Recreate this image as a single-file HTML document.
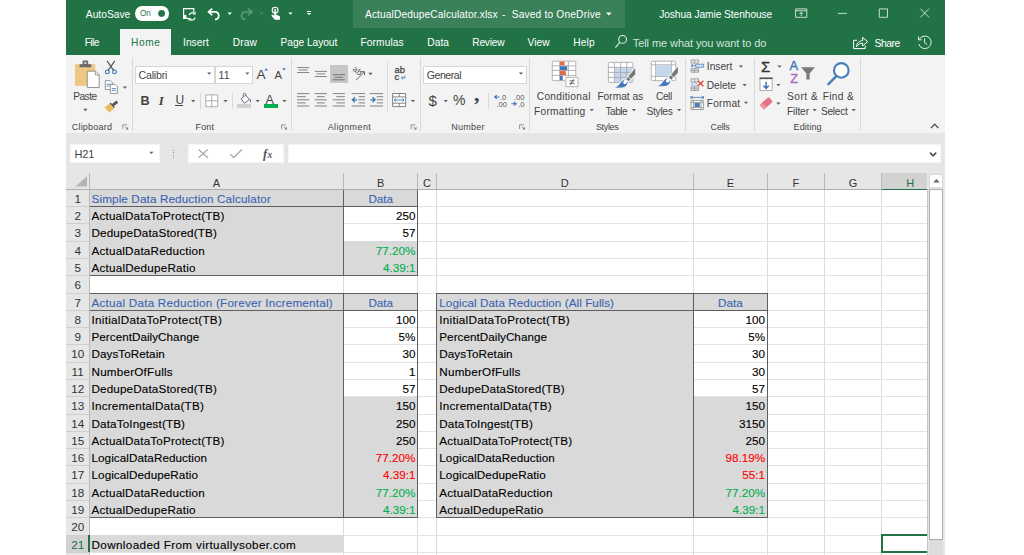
<!DOCTYPE html>
<html lang="en"><head><meta charset="utf-8"><title>ActualDedupeCalculator.xlsx - Excel</title>
<style>
html,body{margin:0;padding:0;background:#fff;}
body{width:1024px;height:555px;position:relative;overflow:hidden;font-family:"Liberation Sans",sans-serif;}
#app div{position:absolute;box-sizing:border-box;}
#app span{position:absolute;white-space:pre;line-height:1;}
#app svg{position:absolute;left:0;top:0;}
</style></head><body><div id="app">
<div style="left:66.40px;top:0.00px;width:878.40px;height:55.40px;background:#217346;"></div>
<div style="left:352.70px;top:0.00px;width:272.50px;height:27.90px;background:#3a8059;"></div>
<div style="left:120.20px;top:28.60px;width:50.80px;height:27.20px;background:#f3f3f3;"></div>
<div style="left:66.40px;top:55.40px;width:878.40px;height:77.80px;background:#f3f3f3;"></div>
<div style="left:66.40px;top:133.20px;width:878.40px;height:421.80px;background:#e6e6e6;"></div>
<div style="left:134.70px;top:6.30px;width:33.90px;height:14.30px;background:#fff;border-radius:7.2px;"></div>
<div style="left:131.90px;top:58.00px;width:1.00px;height:72.80px;background:#d9d9d9;"></div>
<div style="left:291.20px;top:58.00px;width:1.00px;height:72.80px;background:#d9d9d9;"></div>
<div style="left:420.10px;top:58.00px;width:1.00px;height:72.80px;background:#d9d9d9;"></div>
<div style="left:528.90px;top:58.00px;width:1.00px;height:72.80px;background:#d9d9d9;"></div>
<div style="left:685.00px;top:58.00px;width:1.00px;height:72.80px;background:#d9d9d9;"></div>
<div style="left:754.10px;top:58.00px;width:1.00px;height:72.80px;background:#d9d9d9;"></div>
<div style="left:859.50px;top:58.00px;width:1.00px;height:72.80px;background:#d9d9d9;"></div>
<div style="left:387.40px;top:61.40px;width:1.00px;height:50.90px;background:#d9d9d9;"></div>
<div style="left:199.80px;top:92.70px;width:1.00px;height:16.70px;background:#d9d9d9;"></div>
<div style="left:232.00px;top:92.70px;width:1.00px;height:16.70px;background:#d9d9d9;"></div>
<div style="left:488.10px;top:92.70px;width:1.00px;height:16.70px;background:#d9d9d9;"></div>
<div style="left:135.20px;top:65.50px;width:79.70px;height:18.00px;background:#fff;border:1px solid #d6d6d6;"></div>
<div style="left:214.90px;top:65.50px;width:38.30px;height:18.00px;background:#fff;border:1px solid #d6d6d6;"></div>
<div style="left:423.40px;top:65.50px;width:103.40px;height:18.00px;background:#fff;border:1px solid #d6d6d6;"></div>
<div style="left:175.30px;top:105.30px;width:8.20px;height:1.00px;background:#444444;"></div>
<div style="left:263.90px;top:104.20px;width:14.30px;height:3.70px;background:#00b050;"></div>
<div style="left:69.90px;top:143.70px;width:90.20px;height:19.50px;background:#fff;border:1px solid #f4f4f4;"></div>
<div style="left:187.50px;top:143.70px;width:96.80px;height:19.50px;background:#fff;border:1px solid #f4f4f4;"></div>
<div style="left:287.80px;top:143.70px;width:653.00px;height:19.50px;background:#fff;border:1px solid #f4f4f4;"></div>
<div style="left:89.00px;top:189.30px;width:838.30px;height:365.70px;background:#fff;"></div>
<div style="left:881.50px;top:172.80px;width:45.80px;height:16.50px;background:#d2d2d2;"></div>
<div style="left:66.40px;top:535.10px;width:22.60px;height:17.29px;background:#d2d2d2;"></div>
<div style="left:343.40px;top:189.30px;width:1.00px;height:365.70px;background:#dcdcdc;"></div>
<div style="left:417.10px;top:189.30px;width:1.00px;height:365.70px;background:#dcdcdc;"></div>
<div style="left:435.80px;top:189.30px;width:1.00px;height:365.70px;background:#dcdcdc;"></div>
<div style="left:692.90px;top:189.30px;width:1.00px;height:365.70px;background:#dcdcdc;"></div>
<div style="left:766.80px;top:189.30px;width:1.00px;height:365.70px;background:#dcdcdc;"></div>
<div style="left:824.00px;top:189.30px;width:1.00px;height:365.70px;background:#dcdcdc;"></div>
<div style="left:881.00px;top:189.30px;width:1.00px;height:365.70px;background:#dcdcdc;"></div>
<div style="left:89.00px;top:206.09px;width:838.30px;height:1.00px;background:#e2e2e2;"></div>
<div style="left:89.00px;top:223.38px;width:838.30px;height:1.00px;background:#e2e2e2;"></div>
<div style="left:89.00px;top:240.67px;width:838.30px;height:1.00px;background:#e2e2e2;"></div>
<div style="left:89.00px;top:257.96px;width:838.30px;height:1.00px;background:#e2e2e2;"></div>
<div style="left:89.00px;top:275.25px;width:838.30px;height:1.00px;background:#e2e2e2;"></div>
<div style="left:89.00px;top:292.54px;width:838.30px;height:1.00px;background:#e2e2e2;"></div>
<div style="left:89.00px;top:309.83px;width:838.30px;height:1.00px;background:#e2e2e2;"></div>
<div style="left:89.00px;top:327.12px;width:838.30px;height:1.00px;background:#e2e2e2;"></div>
<div style="left:89.00px;top:344.41px;width:838.30px;height:1.00px;background:#e2e2e2;"></div>
<div style="left:89.00px;top:361.70px;width:838.30px;height:1.00px;background:#e2e2e2;"></div>
<div style="left:89.00px;top:378.99px;width:838.30px;height:1.00px;background:#e2e2e2;"></div>
<div style="left:89.00px;top:396.28px;width:838.30px;height:1.00px;background:#e2e2e2;"></div>
<div style="left:89.00px;top:413.57px;width:838.30px;height:1.00px;background:#e2e2e2;"></div>
<div style="left:89.00px;top:430.86px;width:838.30px;height:1.00px;background:#e2e2e2;"></div>
<div style="left:89.00px;top:448.15px;width:838.30px;height:1.00px;background:#e2e2e2;"></div>
<div style="left:89.00px;top:465.44px;width:838.30px;height:1.00px;background:#e2e2e2;"></div>
<div style="left:89.00px;top:482.73px;width:838.30px;height:1.00px;background:#e2e2e2;"></div>
<div style="left:89.00px;top:500.02px;width:838.30px;height:1.00px;background:#e2e2e2;"></div>
<div style="left:89.00px;top:517.31px;width:838.30px;height:1.00px;background:#e2e2e2;"></div>
<div style="left:89.00px;top:534.60px;width:838.30px;height:1.00px;background:#e2e2e2;"></div>
<div style="left:89.00px;top:551.89px;width:838.30px;height:1.00px;background:#e2e2e2;"></div>
<div style="left:89.00px;top:189.30px;width:254.90px;height:86.45px;background:#d9d9d9;"></div>
<div style="left:343.90px;top:189.30px;width:73.70px;height:17.29px;background:#d9d9d9;"></div>
<div style="left:343.90px;top:241.17px;width:73.70px;height:34.58px;background:#d9d9d9;"></div>
<div style="left:89.00px;top:293.04px;width:254.90px;height:224.77px;background:#d9d9d9;"></div>
<div style="left:343.90px;top:293.04px;width:73.70px;height:17.29px;background:#d9d9d9;"></div>
<div style="left:343.90px;top:396.78px;width:73.70px;height:121.03px;background:#d9d9d9;"></div>
<div style="left:436.30px;top:293.04px;width:257.10px;height:224.77px;background:#d9d9d9;"></div>
<div style="left:693.40px;top:293.04px;width:73.90px;height:17.29px;background:#d9d9d9;"></div>
<div style="left:693.40px;top:396.78px;width:73.90px;height:121.03px;background:#d9d9d9;"></div>
<div style="left:89.00px;top:535.10px;width:254.90px;height:17.29px;background:#d9d9d9;"></div>
<div style="left:89.00px;top:206.00px;width:329.00px;height:1.00px;background:#5f5f5f;"></div>
<div style="left:89.00px;top:275.00px;width:329.00px;height:1.00px;background:#5f5f5f;"></div>
<div style="left:343.00px;top:189.00px;width:1.00px;height:87.00px;background:#5f5f5f;"></div>
<div style="left:417.00px;top:189.00px;width:1.00px;height:87.00px;background:#5f5f5f;"></div>
<div style="left:89.00px;top:293.00px;width:329.00px;height:1.00px;background:#5f5f5f;"></div>
<div style="left:89.00px;top:310.00px;width:329.00px;height:1.00px;background:#5f5f5f;"></div>
<div style="left:89.00px;top:517.00px;width:329.00px;height:1.00px;background:#5f5f5f;"></div>
<div style="left:343.00px;top:293.00px;width:1.00px;height:225.00px;background:#5f5f5f;"></div>
<div style="left:417.00px;top:293.00px;width:1.00px;height:225.00px;background:#5f5f5f;"></div>
<div style="left:436.00px;top:293.00px;width:332.00px;height:1.00px;background:#5f5f5f;"></div>
<div style="left:436.00px;top:310.00px;width:332.00px;height:1.00px;background:#5f5f5f;"></div>
<div style="left:436.00px;top:517.00px;width:332.00px;height:1.00px;background:#5f5f5f;"></div>
<div style="left:436.00px;top:293.00px;width:1.00px;height:225.00px;background:#5f5f5f;"></div>
<div style="left:693.00px;top:293.00px;width:1.00px;height:225.00px;background:#5f5f5f;"></div>
<div style="left:767.00px;top:293.00px;width:1.00px;height:225.00px;background:#5f5f5f;"></div>
<div style="left:88.50px;top:173.00px;width:1.00px;height:16.30px;background:#b9b9b9;"></div>
<div style="left:343.40px;top:173.00px;width:1.00px;height:16.30px;background:#b9b9b9;"></div>
<div style="left:417.10px;top:173.00px;width:1.00px;height:16.30px;background:#b9b9b9;"></div>
<div style="left:435.80px;top:173.00px;width:1.00px;height:16.30px;background:#b9b9b9;"></div>
<div style="left:692.90px;top:173.00px;width:1.00px;height:16.30px;background:#b9b9b9;"></div>
<div style="left:766.80px;top:173.00px;width:1.00px;height:16.30px;background:#b9b9b9;"></div>
<div style="left:824.00px;top:173.00px;width:1.00px;height:16.30px;background:#b9b9b9;"></div>
<div style="left:881.00px;top:173.00px;width:1.00px;height:16.30px;background:#b9b9b9;"></div>
<div style="left:66.40px;top:188.80px;width:860.90px;height:1.00px;background:#adadad;"></div>
<div style="left:88.50px;top:189.30px;width:1.00px;height:365.70px;background:#b9b9b9;"></div>
<div style="left:66.40px;top:206.09px;width:22.60px;height:1.00px;background:#cfcfcf;"></div>
<div style="left:66.40px;top:223.38px;width:22.60px;height:1.00px;background:#cfcfcf;"></div>
<div style="left:66.40px;top:240.67px;width:22.60px;height:1.00px;background:#cfcfcf;"></div>
<div style="left:66.40px;top:257.96px;width:22.60px;height:1.00px;background:#cfcfcf;"></div>
<div style="left:66.40px;top:275.25px;width:22.60px;height:1.00px;background:#cfcfcf;"></div>
<div style="left:66.40px;top:292.54px;width:22.60px;height:1.00px;background:#cfcfcf;"></div>
<div style="left:66.40px;top:309.83px;width:22.60px;height:1.00px;background:#cfcfcf;"></div>
<div style="left:66.40px;top:327.12px;width:22.60px;height:1.00px;background:#cfcfcf;"></div>
<div style="left:66.40px;top:344.41px;width:22.60px;height:1.00px;background:#cfcfcf;"></div>
<div style="left:66.40px;top:361.70px;width:22.60px;height:1.00px;background:#cfcfcf;"></div>
<div style="left:66.40px;top:378.99px;width:22.60px;height:1.00px;background:#cfcfcf;"></div>
<div style="left:66.40px;top:396.28px;width:22.60px;height:1.00px;background:#cfcfcf;"></div>
<div style="left:66.40px;top:413.57px;width:22.60px;height:1.00px;background:#cfcfcf;"></div>
<div style="left:66.40px;top:430.86px;width:22.60px;height:1.00px;background:#cfcfcf;"></div>
<div style="left:66.40px;top:448.15px;width:22.60px;height:1.00px;background:#cfcfcf;"></div>
<div style="left:66.40px;top:465.44px;width:22.60px;height:1.00px;background:#cfcfcf;"></div>
<div style="left:66.40px;top:482.73px;width:22.60px;height:1.00px;background:#cfcfcf;"></div>
<div style="left:66.40px;top:500.02px;width:22.60px;height:1.00px;background:#cfcfcf;"></div>
<div style="left:66.40px;top:517.31px;width:22.60px;height:1.00px;background:#cfcfcf;"></div>
<div style="left:66.40px;top:534.60px;width:22.60px;height:1.00px;background:#cfcfcf;"></div>
<div style="left:66.40px;top:551.89px;width:22.60px;height:1.00px;background:#cfcfcf;"></div>
<div style="left:881.50px;top:188.50px;width:45.80px;height:1.60px;background:#217346;"></div>
<div style="left:88.00px;top:535.10px;width:1.60px;height:17.29px;background:#217346;"></div>
<div style="left:880.60px;top:534.10px;width:60.00px;height:19.29px;background:transparent;border:2px solid #217346;"></div>
<div style="left:927.30px;top:172.50px;width:17.50px;height:382.50px;background:#e6e6e6;"></div>
<div style="left:926.80px;top:189.30px;width:1.00px;height:365.70px;background:#c4c4c4;"></div>
<div style="left:929.40px;top:173.70px;width:14.00px;height:14.20px;background:#fff;border:1px solid #dadada;"></div>
<div style="left:929.40px;top:189.20px;width:14.00px;height:351.20px;background:#fff;border:1px solid #ababab;"></div>
<div style="left:929.40px;top:540.40px;width:14.00px;height:14.60px;background:#dcdcdc;"></div>
<div style="left:306.80px;top:11.00px;width:4.40px;height:0.90px;background:#fff;"></div>
<div style="left:237.30px;top:104.40px;width:14.00px;height:3.20px;background:#d0d0d0;"></div>
<div style="left:330.20px;top:65.10px;width:17.70px;height:18.10px;background:#c6c6c6;"></div>
<div style="left:172.50px;top:149.60px;width:1.10px;height:1.10px;background:#8f8f8f;"></div>
<div style="left:172.50px;top:152.20px;width:1.10px;height:1.10px;background:#8f8f8f;"></div>
<div style="left:172.50px;top:154.80px;width:1.10px;height:1.10px;background:#8f8f8f;"></div>
<div style="left:172.50px;top:157.40px;width:1.10px;height:1.10px;background:#8f8f8f;"></div>
<svg width="1024" height="555" viewBox="0 0 1024 555">
<circle cx="161.6" cy="13.4" r="3.4" fill="#217346"/>
<g fill="none" stroke="#fff" stroke-width="1.2"><path d="M189 18.3H183.6V8.7H193.8V12.4"/><path d="M189.2 15.2a3 3 0 0 1 5.4 -1.2M195 17.6a3 3 0 0 1 -5.4 1.2"/></g>
<path d="M183 14.9h3.4v3.9H183z" fill="#fff"/>
<path d="M195.6 11.6v3h-3zM188.6 21.2v-3h3z" fill="#fff"/>
<path d="M212.3 8.6L208.4 11.9L212.3 15.2M208.6 11.9H216a4 4 0 0 1 0.6 7.4h-1.6" fill="none" stroke="#fff" stroke-width="1.7" stroke-linejoin="round"/>
<path d="M227.50 12.50h4.40l-2.20 2.40z" fill="#fff"/>
<path d="M248.1 8.6L252 11.9L248.1 15.2M251.8 11.9H244.4a4 4 0 0 0 -0.6 7.4h1.6" fill="none" stroke="#5f9c7b" stroke-width="1.5" stroke-linejoin="round"/>
<path d="M259.60 12.50h4.00l-2.00 2.00z" fill="#4f8f6d"/>
<circle cx="275.1" cy="10.2" r="2.9" fill="none" stroke="#fff" stroke-width="1.1"/>
<path d="M274.3 9.6a0.8 0.8 0 0 1 1.6 0V14.6L279.9 16.2V19.7H274.8L271.2 15.6L272.6 14.6L274.3 15.8z" fill="#fff"/>
<path d="M288.20 12.40h4.40l-2.20 2.40z" fill="#fff"/>
<path d="M306.80 12.90h4.40l-2.20 2.20z" fill="#fff"/>
<path d="M606.00 12.55h5.60l-2.80 2.90z" fill="#fff"/>
<g fill="none" stroke="#e6f0ea" stroke-width="1.1"><circle cx="622.6" cy="39.4" r="3.9"/><path d="M619.8 42.3L615.4 47.6"/></g>
<g fill="none" stroke="#dbe9e1" stroke-width="0.9"><path d="M795.6 8.9H806.8V17.3H795.6zM795.6 10.8H806.8M801.2 16V12.3M799.4 14L801.2 12.2L803 14"/><path d="M837.9 13.4H846.8"/><path d="M879.3 8.9H887.5V17.3H879.3z"/><path d="M920.4 8.7L929 17.4M929 8.7L920.4 17.4"/></g>
<g fill="none" stroke="#fff" stroke-width="1"><path d="M857 40.300H853.600V48.600H865.200V45.800"/><path d="M856.400 47.000C856.600 42.800 859.400 40.800 862.600 40.600V37.400L867.700 41.700L862.600 46.000V43.200C859.800 43.200 857.800 44.300 856.400 47.000z"/></g>
<g fill="none" stroke="#e6f0ea" stroke-width="1"><path d="M919.4 39.2A6.3 6.3 0 1 1 918.8 44"/><path d="M918.5 36.6V39.8H921.7"/><path d="M924.6 38.4V42.6L927.2 44.6"/></g>
<path d="M207.10 72.45h4.20l-2.10 2.30z" fill="#5e5e5e"/>
<path d="M245.20 72.45h4.20l-2.10 2.30z" fill="#5e5e5e"/>
<path d="M518.90 72.45h4.20l-2.10 2.30z" fill="#5e5e5e"/>
<path d="M83.30 108.85h4.20l-2.10 2.30z" fill="#5e5e5e"/>
<path d="M122.80 86.55h4.20l-2.10 2.30z" fill="#5e5e5e"/>
<path d="M191.10 100.05h4.20l-2.10 2.30z" fill="#5e5e5e"/>
<path d="M223.40 100.05h4.20l-2.10 2.30z" fill="#5e5e5e"/>
<path d="M255.60 100.05h4.20l-2.10 2.30z" fill="#5e5e5e"/>
<path d="M282.40 100.05h4.20l-2.10 2.30z" fill="#5e5e5e"/>
<path d="M368.40 72.85h4.20l-2.10 2.30z" fill="#5e5e5e"/>
<path d="M410.80 100.05h4.20l-2.10 2.30z" fill="#5e5e5e"/>
<path d="M443.60 100.05h4.20l-2.10 2.30z" fill="#5e5e5e"/>
<path d="M589.70 108.95h4.20l-2.10 2.30z" fill="#5e5e5e"/>
<path d="M631.80 108.95h4.20l-2.10 2.30z" fill="#5e5e5e"/>
<path d="M677.00 108.95h4.20l-2.10 2.30z" fill="#5e5e5e"/>
<path d="M738.80 65.55h4.20l-2.10 2.30z" fill="#5e5e5e"/>
<path d="M742.50 84.05h4.20l-2.10 2.30z" fill="#5e5e5e"/>
<path d="M743.90 101.75h4.20l-2.10 2.30z" fill="#5e5e5e"/>
<path d="M777.40 65.55h4.20l-2.10 2.30z" fill="#5e5e5e"/>
<path d="M776.30 84.05h4.20l-2.10 2.30z" fill="#5e5e5e"/>
<path d="M776.30 102.45h4.20l-2.10 2.30z" fill="#5e5e5e"/>
<path d="M812.60 108.95h4.20l-2.10 2.30z" fill="#5e5e5e"/>
<path d="M851.60 108.95h4.20l-2.10 2.30z" fill="#5e5e5e"/>
<path d="M149.30 151.65h4.20l-2.10 2.30z" fill="#5e5e5e"/>
<path d="M122.8 129.0V124.8H127.0" fill="none" stroke="#7a7a7a" stroke-width="0.8"/><path d="M128.2 126.8V129.6H125.39999999999999z" fill="#7a7a7a"/><path d="M125.0 126.4L127.39999999999999 128.8" stroke="#7a7a7a" stroke-width="0.8"/>
<path d="M281.6 129.0V124.8H285.8" fill="none" stroke="#7a7a7a" stroke-width="0.8"/><path d="M287.0 126.8V129.6H284.20000000000005z" fill="#7a7a7a"/><path d="M283.8 126.4L286.20000000000005 128.8" stroke="#7a7a7a" stroke-width="0.8"/>
<path d="M411.1 129.0V124.8H415.3" fill="none" stroke="#7a7a7a" stroke-width="0.8"/><path d="M416.5 126.8V129.6H413.70000000000005z" fill="#7a7a7a"/><path d="M413.3 126.4L415.70000000000005 128.8" stroke="#7a7a7a" stroke-width="0.8"/>
<path d="M519.6 129.0V124.8H523.8000000000001" fill="none" stroke="#7a7a7a" stroke-width="0.8"/><path d="M525.0 126.8V129.6H522.2z" fill="#7a7a7a"/><path d="M521.8000000000001 126.4L524.2 128.8" stroke="#7a7a7a" stroke-width="0.8"/>
<path d="M931 128L934.7 124.2L938.4 128" fill="none" stroke="#555" stroke-width="1.3"/>
<path d="M75 64.2H95.2V85.8H75z" fill="#edc883"/>
<path d="M79.6 67.2V64.2H82.6V61.6A1 1 0 0 1 83.6 60.6H87.2A1 1 0 0 1 88.2 61.600V64.2H91.2V67.2z" fill="#6a6a6a"/>
<path d="M84.4 62.2h2v1.6h-2z" fill="#f3f3f3"/>
<path d="M87.3 71.2H95.6L99.2 74.8V87.5H87.3z" fill="#fff" stroke="#8a8a8a" stroke-width="0.9"/>
<path d="M95.4 71.4V75H99" fill="none" stroke="#8a8a8a" stroke-width="0.8"/>
<g fill="none" stroke-linecap="round"><path d="M107.2 61.2L113.6 70.4M114.6 61.2L108.2 70.4" stroke="#555" stroke-width="1.2"/><circle cx="107.3" cy="71.9" r="1.9" stroke="#3f73b7" stroke-width="1.1"/><circle cx="114.5" cy="71.9" r="1.9" stroke="#3f73b7" stroke-width="1.1"/></g>
<g stroke="#7d7d7d" stroke-width="0.8" fill="#fff"><path d="M105.3 80.6H110.2L112.6 83V89.6H105.3z"/><path d="M110.4 84.4H115.2L117.6 86.800V93.4H110.4z"/></g>
<path d="M106.6 84.2h4M106.6 86h3M111.8 88.6h4.400M111.800 90.400h4.400" stroke="#3f73b7" stroke-width="0.8"/>
<path d="M104.600 107.600L109.800 103.400L114.200 108.400L109.200 112.400z" fill="#ebbb5c"/>
<path d="M112.600 105.400L117.300 101.700" stroke="#555" stroke-width="2.800"/>
<path d="M110.200 102.800L114.400 107.700" stroke="#555" stroke-width="1.300"/>
<path d="M264.3 70.600h3.800l-1.900 -2.400z" fill="#3f73b7"/>
<path d="M282 68.200h3.800l-1.900 2.400z" fill="#3f73b7"/>
<g fill="none" stroke="#a6a6a6" stroke-width="0.9"><path d="M205.800 94.900H217.700V106.700H205.800z" fill="#fff"/><path d="M211.750 94.900V106.700M205.800 100.800H217.700"/></g>
<path d="M241.200 98.800L245.600 95.200L249.400 99.600L244.400 103.300z" fill="#fff" stroke="#666" stroke-width="0.9" stroke-linejoin="round"/>
<path d="M243.200 96.800V94.600A1.300 1.300 0 0 1 245.800 94.600V96" fill="none" stroke="#666" stroke-width="0.9"/>
<path d="M249.600 98.200C251.200 100 251.400 101.400 250.600 102.700C249.900 101.600 249.600 100 249.600 98.200z" fill="#3f73b7"/>
<path d="M297.10 67.60h12.10" stroke="#777" stroke-width="0.9"/>
<path d="M298.90 70.00h8.50" stroke="#777" stroke-width="0.9"/>
<path d="M297.10 72.50h12.10" stroke="#777" stroke-width="0.9"/>
<path d="M314.80 71.40h12.10" stroke="#777" stroke-width="0.9"/>
<path d="M316.60 73.90h8.50" stroke="#777" stroke-width="0.9"/>
<path d="M314.80 76.50h12.10" stroke="#777" stroke-width="0.9"/>
<path d="M332.80 74.70h12.10" stroke="#6a6a6a" stroke-width="0.9"/>
<path d="M334.60 77.30h8.50" stroke="#6a6a6a" stroke-width="0.9"/>
<path d="M332.80 79.80h12.10" stroke="#6a6a6a" stroke-width="0.9"/>
<path d="M297.10 93.60h12.10" stroke="#777" stroke-width="0.9"/>
<path d="M297.10 96.70h8.60" stroke="#777" stroke-width="0.9"/>
<path d="M297.10 99.80h12.10" stroke="#777" stroke-width="0.9"/>
<path d="M297.10 102.90h8.60" stroke="#777" stroke-width="0.9"/>
<path d="M297.10 106.00h12.10" stroke="#777" stroke-width="0.9"/>
<path d="M314.80 93.60h12.10" stroke="#777" stroke-width="0.9"/>
<path d="M316.85 96.70h8.00" stroke="#777" stroke-width="0.9"/>
<path d="M314.80 99.80h12.10" stroke="#777" stroke-width="0.9"/>
<path d="M316.85 102.90h8.00" stroke="#777" stroke-width="0.9"/>
<path d="M314.80 106.00h12.10" stroke="#777" stroke-width="0.9"/>
<path d="M332.80 93.60h12.10" stroke="#777" stroke-width="0.9"/>
<path d="M336.30 96.70h8.60" stroke="#777" stroke-width="0.9"/>
<path d="M332.80 99.80h12.10" stroke="#777" stroke-width="0.9"/>
<path d="M336.30 102.90h8.60" stroke="#777" stroke-width="0.9"/>
<path d="M332.80 106.00h12.10" stroke="#777" stroke-width="0.9"/>
<path d="M351.70 93.60h13.30" stroke="#777" stroke-width="0.9"/>
<path d="M351.70 106.00h13.30" stroke="#777" stroke-width="0.9"/>
<path d="M358.60 96.70h6.40" stroke="#777" stroke-width="0.9"/>
<path d="M358.60 99.80h6.40" stroke="#777" stroke-width="0.9"/>
<path d="M358.60 102.90h6.40" stroke="#777" stroke-width="0.9"/>
<path d="M357.200 99.800H352.600M355 97.200L352.400 99.800L355 102.400" fill="none" stroke="#3f73b7" stroke-width="1.300"/>
<path d="M369.80 93.60h13.30" stroke="#777" stroke-width="0.9"/>
<path d="M369.80 106.00h13.30" stroke="#777" stroke-width="0.9"/>
<path d="M376.70 96.70h6.40" stroke="#777" stroke-width="0.9"/>
<path d="M376.70 99.80h6.40" stroke="#777" stroke-width="0.9"/>
<path d="M376.70 102.90h6.40" stroke="#777" stroke-width="0.9"/>
<path d="M370.300 99.800H374.900M372.500 97.200L375.100 99.800L372.500 102.400" fill="none" stroke="#3f73b7" stroke-width="1.300"/>
<g transform="rotate(38 357.500 71.000)"><text x="352.600" y="73.600" font-size="8.400" fill="#555" font-family="Liberation Sans, sans-serif">ab</text></g>
<path d="M356.000 80.200L364.200 72.000M364.500 75.200V71.700H361.000" fill="none" stroke="#555" stroke-width="0.9"/>
<path d="M404.900 75.600V77.900H401.600M402.900 76.500L401.400 77.900L402.900 79.300" fill="none" stroke="#3f73b7" stroke-width="0.9"/>
<g fill="#fff" stroke="#777" stroke-width="0.9"><path d="M392.600 93.500H405.700V106.600H392.600z"/><path d="M392.600 96.900H405.700M392.600 103.200H405.700M399.150 93.500V96.900M399.150 103.200V106.600" fill="none"/></g>
<path d="M394.300 100H404M395.900 98.400L394.200 100L395.900 101.600M402.400 98.400L404.100 100L402.400 101.600" fill="none" stroke="#3f73b7" stroke-width="0.9"/>
<text x="500.0" y="100.0" font-size="7.6" fill="#555" font-family="Liberation Sans, sans-serif">.0</text>
<text x="496.3" y="106.8" font-size="7.6" fill="#555" font-family="Liberation Sans, sans-serif">.00</text>
<path d="M499.500 97H494.800M496.800 95.100L494.700 97L496.800 98.900" fill="none" stroke="#3f73b7" stroke-width="1.100"/>
<text x="513.8" y="100.0" font-size="7.6" fill="#555" font-family="Liberation Sans, sans-serif">.00</text>
<text x="518.2" y="106.8" font-size="7.6" fill="#555" font-family="Liberation Sans, sans-serif">.0</text>
<path d="M511.300 103.800H516M514 101.900L516.100 103.800L514 105.700" fill="none" stroke="#3f73b7" stroke-width="1.100"/>
<g fill="#fff" stroke="#a3a3a3" stroke-width="0.8"><rect x="552.300" y="61.200" width="23.500" height="19.400" rx="0.800"/><path d="M552.300 65.800H575.800M552.300 70.500H575.800M552.300 75.400H575.800M559.600 61.200V80.600M568.400 61.200V80.600" fill="none"/></g>
<path d="M560 61.500h4.600v3.900h-4.600z" fill="#e2694a"/><path d="M560 66.200h7.200v3.900h-7.200z" fill="#3f76ba"/><path d="M560 70.900h5.900v4.100h-5.900z" fill="#e2694a"/><path d="M560 75.800h2.700v4.400h-2.700z" fill="#3f76ba"/>
<path d="M565.000 76.500H578.900V87.600H565.000z" fill="#f3f3f3"/><path d="M565.900 77.400H578.000V86.700H565.900z" fill="#fff" stroke="#a3a3a3" stroke-width="0.8"/>
<path d="M569.400 80.900H574.600M569.400 83.300H574.600M573.700 79.100L570.300 85.100" fill="none" stroke="#444" stroke-width="0.8"/>
<rect x="608.400" y="62.400" width="24.500" height="20.000" rx="1.200" fill="#fff" stroke="#a3a3a3" stroke-width="0.8"/>
<path d="M614.600 67.600H632.500V82.000H614.600z" fill="#c5d7ec"/>
<path d="M608.400 67.400H632.900M608.400 72.400H632.900M608.400 77.400H632.900M614.400 62.400V82.400M620.600 62.400V82.400M626.700 62.400V82.400" fill="none" stroke="#a3a3a3" stroke-width="0.8"/>
<g transform="translate(0 0)"><path d="M635.200 68.000V74.200L630.900 78.800L628.500 76.400z" fill="none" stroke="#f6f6f6" stroke-width="1.800"/><path d="M628.100 76.900L630.400 79.300L628.500 81.300L626.100 78.900z" fill="none" stroke="#f6f6f6" stroke-width="1.800"/><path d="M626.300 79.700C628.600 81.800 627.800 86.500 622.600 87.500L615.000 87.700C619.000 86.200 620.400 82.400 623.300 80.300C624.300 79.500 625.500 79.200 626.300 79.700z" fill="none" stroke="#f6f6f6" stroke-width="1.800"/><path d="M635.200 68.000V74.200L630.900 78.800L628.500 76.400z" fill="#757575"/><path d="M628.100 76.900L630.400 79.300L628.500 81.300L626.100 78.900z" fill="#757575"/><path d="M626.300 79.700C628.600 81.800 627.800 86.500 622.600 87.500L615.000 87.700C619.000 86.200 620.400 82.400 623.300 80.300C624.300 79.500 625.500 79.200 626.300 79.700z" fill="#4379bd"/><ellipse cx="625.300" cy="81.900" rx="1.800" ry="2.400" transform="rotate(40 625.300 81.900)" fill="#fff"/></g>
<g fill="#fff" stroke="#a3a3a3" stroke-width="0.8"><rect x="651.300" y="61.200" width="24.400" height="19.400" rx="1.000"/><path d="M651.300 64.800H675.700M651.300 76.400H675.700M655.600 61.200V80.600M671.400 61.200V80.600" fill="none"/></g>
<path d="M656.000 65.200H671.000V76.000H656.000z" fill="#c5d7ec"/>
<g transform="translate(42.7 -1.55)"><path d="M635.200 68.000V74.200L630.900 78.800L628.500 76.400z" fill="none" stroke="#f6f6f6" stroke-width="1.800"/><path d="M628.100 76.900L630.400 79.300L628.500 81.300L626.100 78.900z" fill="none" stroke="#f6f6f6" stroke-width="1.800"/><path d="M626.300 79.700C628.600 81.800 627.800 86.500 622.600 87.500L615.000 87.700C619.000 86.200 620.400 82.400 623.300 80.300C624.300 79.500 625.500 79.200 626.300 79.700z" fill="none" stroke="#f6f6f6" stroke-width="1.800"/><path d="M635.200 68.000V74.200L630.900 78.800L628.500 76.400z" fill="#757575"/><path d="M628.100 76.900L630.400 79.300L628.500 81.300L626.100 78.900z" fill="#757575"/><path d="M626.300 79.700C628.600 81.800 627.800 86.500 622.600 87.500L615.000 87.700C619.000 86.200 620.400 82.400 623.300 80.300C624.300 79.500 625.500 79.200 626.300 79.700z" fill="#4379bd"/><ellipse cx="625.300" cy="81.900" rx="1.800" ry="2.400" transform="rotate(40 625.300 81.900)" fill="#fff"/></g>
<g fill="none" stroke="#8a8a8a" stroke-width="0.8"><path d="M691 60H698.400V63H691zM694.700 60V63M691 68.600H698.400V72.200H691zM694.700 68.600V72.200M691 70.400H698.400"/></g>
<path d="M695.600 64.200H703.600V67.200H695.600z" fill="#dbe6f4" stroke="#4a7ebb" stroke-width="0.8"/>
<path d="M694.800 65.700H691.200M692.800 64.100L691 65.700L692.800 67.300" fill="none" stroke="#3f73b7" stroke-width="0.9"/>
<g fill="none" stroke="#8a8a8a" stroke-width="0.8"><path d="M691 78.800H698.400V81.800H691zM694.700 78.800V81.800M691 87H698.400V90.600H691zM694.700 87V90.600M691 88.800H698.400"/></g>
<path d="M691.400 83H697V86H691.400z" fill="#dbe6f4" stroke="#9ab4d6" stroke-width="0.8"/>
<path d="M697.800 80.800L703.400 86.200M703.400 80.800L697.800 86.200" stroke="#e2492f" stroke-width="1.300"/>
<path d="M691 97.400H703.400M691 96V98.800M703.400 96V98.800M692.800 96.200L691.200 97.400L692.800 98.600M701.600 96.200L703.200 97.400L701.600 98.600" fill="none" stroke="#3f73b7" stroke-width="0.8"/>
<g fill="#fff" stroke="#8a8a8a" stroke-width="0.8"><path d="M691 100.400H703.400V109.600H691z"/><path d="M691 102.400H703.400M691 107.600H703.400M693.400 100.400V109.600M701 100.400V109.600" fill="none"/></g>
<path d="M694.600 103H699.800V107H694.600z" fill="#4a7ebb"/>
<path d="M760.000 78.400H772.200V90.500H760.000z" fill="#fff" stroke="#9a9a9a" stroke-width="0.8"/>
<path d="M759.600 78.300H772.600" stroke="#555" stroke-width="1.700"/>
<path d="M766.100 81.800V88.200M763.400 85.700L766.100 88.400L768.800 85.700" fill="none" stroke="#3f73b7" stroke-width="1.500"/>
<g transform="rotate(-42 766.300 103.300)"><rect x="760.300" y="100.100" width="12.000" height="6.400" rx="1.300" fill="#e8718a"/><rect x="760.300" y="100.100" width="3.400" height="6.400" rx="1.200" fill="#ee93a6"/></g>
<path d="M801 67.200H815L809.600 73.400V79.400H806.400V73.400z" fill="#7a7a7a"/>
<circle cx="841.300" cy="70.400" r="7.300" fill="#fff" stroke="#4a7ebb" stroke-width="2.100"/>
<path d="M836.300 76.200L828.400 84.200" stroke="#4a7ebb" stroke-width="2.400" stroke-linecap="round"/>
<path d="M198.600 149.400L207.800 157.800M207.800 149.400L198.600 157.800" stroke="#ababab" stroke-width="1.300"/>
<path d="M230.200 154.200L233.800 157.600L241.800 149.600" fill="none" stroke="#ababab" stroke-width="1.400"/>
<path d="M930 152.600L933.100 155.800L936.200 152.600" fill="none" stroke="#555" stroke-width="1.700"/>
<path d="M87 176.200V186.600H75.400z" fill="#b5b5b5"/>
<path d="M933.200 182.400h6.400l-3.200 -3.400z" fill="#666"/>
</svg>
<span style="left:85.80px;top:9.80px;font-size:10.2px;color:#ffffff;letter-spacing:0.045px;">AutoSave</span>
<span style="left:140.00px;top:9.80px;font-size:8.2px;color:#217346;letter-spacing:-0.037px;">On</span>
<span style="left:365.00px;top:9.80px;font-size:10.2px;color:#ffffff;letter-spacing:0.112px;">ActualDedupeCalculator.xlsx</span>
<span style="left:502.00px;top:9.80px;font-size:10.2px;color:#ffffff;letter-spacing:0.194px;">-</span>
<span style="left:511.70px;top:9.80px;font-size:10.2px;color:#ffffff;letter-spacing:0.176px;">Saved to OneDrive</span>
<span style="left:659.20px;top:9.80px;font-size:10.2px;color:#ffffff;letter-spacing:-0.062px;">Joshua Jamie Stenhouse</span>
<span style="left:84.70px;top:37.80px;font-size:10.2px;color:#ffffff;letter-spacing:-0.574px;">File</span>
<span style="left:183.00px;top:37.80px;font-size:10.2px;color:#ffffff;letter-spacing:0.063px;">Insert</span>
<span style="left:232.70px;top:37.80px;font-size:10.2px;color:#ffffff;letter-spacing:0.173px;">Draw</span>
<span style="left:280.50px;top:37.80px;font-size:10.2px;color:#ffffff;letter-spacing:-0.042px;">Page Layout</span>
<span style="left:360.50px;top:37.80px;font-size:10.2px;color:#ffffff;letter-spacing:0.104px;">Formulas</span>
<span style="left:427.30px;top:37.80px;font-size:10.2px;color:#ffffff;letter-spacing:0.056px;">Data</span>
<span style="left:472.30px;top:37.80px;font-size:10.2px;color:#ffffff;letter-spacing:-0.241px;">Review</span>
<span style="left:527.50px;top:37.80px;font-size:10.2px;color:#ffffff;letter-spacing:0.065px;">View</span>
<span style="left:573.20px;top:37.80px;font-size:10.2px;color:#ffffff;letter-spacing:0.149px;">Help</span>
<span style="left:131.10px;top:37.80px;font-size:10.2px;color:#217346;letter-spacing:0.571px;">Home</span>
<span style="left:632.80px;top:37.90px;font-size:11.0px;color:#d3e4da;letter-spacing:-0.083px;">Tell me what you want to do</span>
<span style="left:874.40px;top:38.70px;font-size:10.4px;color:#ffffff;letter-spacing:-0.434px;">Share</span>
<span style="left:71.70px;top:122.90px;font-size:9.0px;color:#444444;letter-spacing:0.221px;">Clipboard</span>
<span style="left:195.60px;top:122.90px;font-size:9.0px;color:#444444;letter-spacing:0.095px;">Font</span>
<span style="left:327.70px;top:122.90px;font-size:9.0px;color:#444444;letter-spacing:0.384px;">Alignment</span>
<span style="left:451.20px;top:122.90px;font-size:9.0px;color:#444444;letter-spacing:0.237px;">Number</span>
<span style="left:595.90px;top:122.90px;font-size:9.0px;color:#444444;letter-spacing:-0.323px;">Styles</span>
<span style="left:710.60px;top:122.90px;font-size:9.0px;color:#444444;letter-spacing:-0.204px;">Cells</span>
<span style="left:793.60px;top:122.90px;font-size:9.0px;color:#444444;letter-spacing:0.078px;">Editing</span>
<span style="left:138.60px;top:70.10px;font-size:10.6px;color:#444444;letter-spacing:-0.205px;">Calibri</span>
<span style="left:218.60px;top:70.10px;font-size:10.6px;color:#444444;">11</span>
<span style="left:426.80px;top:70.10px;font-size:10.6px;color:#444444;letter-spacing:-0.501px;">General</span>
<span style="left:73.20px;top:91.80px;font-size:10.2px;color:#444444;letter-spacing:-0.516px;">Paste</span>
<span style="left:536.80px;top:91.80px;font-size:10.2px;color:#444444;letter-spacing:0.262px;">Conditional</span>
<span style="left:533.90px;top:106.80px;font-size:10.2px;color:#444444;letter-spacing:0.300px;">Formatting</span>
<span style="left:597.40px;top:91.80px;font-size:10.2px;color:#444444;letter-spacing:-0.007px;">Format as</span>
<span style="left:605.50px;top:106.80px;font-size:10.2px;color:#444444;letter-spacing:-0.540px;">Table</span>
<span style="left:656.00px;top:91.80px;font-size:10.2px;color:#444444;letter-spacing:-0.454px;">Cell</span>
<span style="left:646.60px;top:106.80px;font-size:10.2px;color:#444444;letter-spacing:-0.310px;">Styles</span>
<span style="left:706.80px;top:61.80px;font-size:10.2px;color:#444444;">Insert</span>
<span style="left:706.80px;top:80.80px;font-size:10.2px;color:#444444;letter-spacing:-0.051px;">Delete</span>
<span style="left:706.80px;top:98.80px;font-size:10.2px;color:#444444;letter-spacing:0.207px;">Format</span>
<span style="left:786.90px;top:91.80px;font-size:10.2px;color:#444444;letter-spacing:0.537px;">Sort &amp;</span>
<span style="left:786.90px;top:106.80px;font-size:10.2px;color:#444444;letter-spacing:-0.088px;">Filter</span>
<span style="left:822.70px;top:91.80px;font-size:10.2px;color:#444444;letter-spacing:0.309px;">Find &amp;</span>
<span style="left:820.90px;top:106.80px;font-size:10.2px;color:#444444;letter-spacing:-0.286px;">Select</span>
<span style="left:140.50px;top:95.10px;font-size:12.6px;color:#444444;font-weight:700;letter-spacing:-1.409px;">B</span>
<span style="left:158.80px;top:95.00px;font-family:'Liberation Serif',serif;font-size:12.8px;color:#444444;font-weight:700;font-style:italic;">I</span>
<span style="left:175.50px;top:94.40px;font-size:12.0px;color:#444444;letter-spacing:-0.872px;">U</span>
<span style="left:256.50px;top:68.10px;font-size:13.6px;color:#444444;letter-spacing:0.422px;">A</span>
<span style="left:274.50px;top:69.80px;font-size:11.2px;color:#444444;letter-spacing:0.331px;">A</span>
<span style="left:265.60px;top:94.10px;font-size:12.6px;color:#444444;letter-spacing:2.394px;">A</span>
<span style="left:428.60px;top:93.40px;font-size:15.0px;color:#444444;letter-spacing:-0.344px;">$</span>
<span style="left:453.10px;top:93.40px;font-size:14.0px;color:#444444;letter-spacing:-0.353px;">%</span>
<span style="left:474.00px;top:82.90px;font-family:'Liberation Serif',serif;font-size:22.0px;color:#444444;font-weight:700;">,</span>
<span style="left:761.10px;top:59.40px;font-size:15.0px;color:#333;letter-spacing:1.019px;-webkit-text-stroke:0.3px #333;">Σ</span>
<span style="left:789.60px;top:59.50px;font-size:12.8px;color:#3f73b7;letter-spacing:0.553px;-webkit-text-stroke:0.35px #3f73b7;">A</span>
<span style="left:790.20px;top:72.50px;font-size:12.8px;color:#a86cbd;letter-spacing:-0.028px;-webkit-text-stroke:0.35px #a86cbd;">Z</span>
<span style="left:394.60px;top:65.20px;font-size:9.4px;color:#444444;letter-spacing:-0.138px;-webkit-text-stroke:0.25px #444;">ab</span>
<span style="left:394.60px;top:72.20px;font-size:9.4px;color:#444444;letter-spacing:-0.088px;-webkit-text-stroke:0.25px #444;">c</span>
<span style="left:74.50px;top:148.90px;font-size:11.0px;color:#444444;letter-spacing:-0.094px;">H21</span>
<span style="left:263.00px;top:148.10px;font-family:'Liberation Serif',serif;font-size:12.6px;color:#555;font-weight:700;font-style:italic;">f</span>
<span style="left:267.40px;top:150.70px;font-family:'Liberation Serif',serif;font-size:9.4px;color:#555;font-weight:700;font-style:italic;">x</span>
<span style="left:216.45px;top:177.90px;transform:translateX(-50%);font-size:11.0px;color:#333;">A</span>
<span style="left:380.75px;top:177.90px;transform:translateX(-50%);font-size:11.0px;color:#333;">B</span>
<span style="left:426.95px;top:177.90px;transform:translateX(-50%);font-size:11.0px;color:#333;">C</span>
<span style="left:564.85px;top:177.90px;transform:translateX(-50%);font-size:11.0px;color:#333;">D</span>
<span style="left:730.35px;top:177.90px;transform:translateX(-50%);font-size:11.0px;color:#333;">E</span>
<span style="left:795.90px;top:177.90px;transform:translateX(-50%);font-size:11.0px;color:#333;">F</span>
<span style="left:853.00px;top:177.90px;transform:translateX(-50%);font-size:11.0px;color:#333;">G</span>
<span style="left:910.25px;top:177.90px;transform:translateX(-50%);font-size:11.0px;color:#217346;">H</span>
<span style="left:77.70px;top:193.05px;transform:translateX(-50%);font-size:11.7px;color:#333;">1</span>
<span style="left:77.70px;top:210.05px;transform:translateX(-50%);font-size:11.7px;color:#333;">2</span>
<span style="left:77.70px;top:227.05px;transform:translateX(-50%);font-size:11.7px;color:#333;">3</span>
<span style="left:77.70px;top:245.05px;transform:translateX(-50%);font-size:11.7px;color:#333;">4</span>
<span style="left:77.70px;top:262.05px;transform:translateX(-50%);font-size:11.7px;color:#333;">5</span>
<span style="left:77.70px;top:279.05px;transform:translateX(-50%);font-size:11.7px;color:#333;">6</span>
<span style="left:77.70px;top:297.05px;transform:translateX(-50%);font-size:11.7px;color:#333;">7</span>
<span style="left:77.70px;top:314.05px;transform:translateX(-50%);font-size:11.7px;color:#333;">8</span>
<span style="left:77.70px;top:331.05px;transform:translateX(-50%);font-size:11.7px;color:#333;">9</span>
<span style="left:77.70px;top:348.05px;transform:translateX(-50%);font-size:11.7px;color:#333;">10</span>
<span style="left:77.70px;top:366.05px;transform:translateX(-50%);font-size:11.7px;color:#333;">11</span>
<span style="left:77.70px;top:383.05px;transform:translateX(-50%);font-size:11.7px;color:#333;">12</span>
<span style="left:77.70px;top:400.05px;transform:translateX(-50%);font-size:11.7px;color:#333;">13</span>
<span style="left:77.70px;top:418.05px;transform:translateX(-50%);font-size:11.7px;color:#333;">14</span>
<span style="left:77.70px;top:435.05px;transform:translateX(-50%);font-size:11.7px;color:#333;">15</span>
<span style="left:77.70px;top:452.05px;transform:translateX(-50%);font-size:11.7px;color:#333;">16</span>
<span style="left:77.70px;top:469.05px;transform:translateX(-50%);font-size:11.7px;color:#333;">17</span>
<span style="left:77.70px;top:487.05px;transform:translateX(-50%);font-size:11.7px;color:#333;">18</span>
<span style="left:77.70px;top:504.05px;transform:translateX(-50%);font-size:11.7px;color:#333;">19</span>
<span style="left:77.70px;top:521.05px;transform:translateX(-50%);font-size:11.7px;color:#333;">20</span>
<span style="left:77.70px;top:539.05px;transform:translateX(-50%);font-size:11.7px;color:#217346;">21</span>
<span style="left:91.50px;top:193.05px;font-size:11.7px;color:#3b65b1;letter-spacing:0.126px;-webkit-text-stroke:0.12px #3b65b1;">Simple Data Reduction Calculator</span>
<span style="left:380.75px;top:193.05px;transform:translateX(-50%);font-size:11.7px;color:#3b65b1;-webkit-text-stroke:0.12px #3b65b1;">Data</span>
<span style="left:91.50px;top:210.05px;font-size:11.7px;color:#000000;letter-spacing:0.165px;-webkit-text-stroke:0.12px #000000;">ActualDataToProtect(TB)</span>
<span style="right:608.60px;top:210.05px;font-size:11.7px;color:#000000;-webkit-text-stroke:0.12px #000000;">250</span>
<span style="left:91.50px;top:227.05px;font-size:11.7px;color:#000000;letter-spacing:0.132px;-webkit-text-stroke:0.12px #000000;">DedupeDataStored(TB)</span>
<span style="right:608.60px;top:227.05px;font-size:11.7px;color:#000000;-webkit-text-stroke:0.12px #000000;">57</span>
<span style="left:91.50px;top:245.05px;font-size:11.7px;color:#000000;letter-spacing:0.188px;-webkit-text-stroke:0.12px #000000;">ActualDataReduction</span>
<span style="right:608.60px;top:245.05px;font-size:11.7px;color:#00b050;-webkit-text-stroke:0.12px #00b050;">77.20%</span>
<span style="left:91.50px;top:262.05px;font-size:11.7px;color:#000000;letter-spacing:0.205px;-webkit-text-stroke:0.12px #000000;">ActualDedupeRatio</span>
<span style="right:608.60px;top:262.05px;font-size:11.7px;color:#00b050;-webkit-text-stroke:0.12px #00b050;">4.39:1</span>
<span style="left:91.50px;top:297.05px;font-size:11.7px;color:#3b65b1;letter-spacing:0.221px;-webkit-text-stroke:0.12px #3b65b1;">Actual Data Reduction (Forever Incremental)</span>
<span style="left:380.75px;top:297.05px;transform:translateX(-50%);font-size:11.7px;color:#3b65b1;-webkit-text-stroke:0.12px #3b65b1;">Data</span>
<span style="left:91.50px;top:314.05px;font-size:11.7px;color:#000000;letter-spacing:0.271px;-webkit-text-stroke:0.12px #000000;">InitialDataToProtect(TB)</span>
<span style="right:608.60px;top:314.05px;font-size:11.7px;color:#000000;-webkit-text-stroke:0.12px #000000;">100</span>
<span style="left:439.30px;top:314.05px;font-size:11.7px;color:#000000;letter-spacing:0.271px;-webkit-text-stroke:0.12px #000000;">InitialDataToProtect(TB)</span>
<span style="right:258.90px;top:314.05px;font-size:11.7px;color:#000000;-webkit-text-stroke:0.12px #000000;">100</span>
<span style="left:91.50px;top:331.05px;font-size:11.7px;color:#000000;letter-spacing:0.029px;-webkit-text-stroke:0.12px #000000;">PercentDailyChange</span>
<span style="right:608.60px;top:331.05px;font-size:11.7px;color:#000000;-webkit-text-stroke:0.12px #000000;">5%</span>
<span style="left:439.30px;top:331.05px;font-size:11.7px;color:#000000;letter-spacing:0.029px;-webkit-text-stroke:0.12px #000000;">PercentDailyChange</span>
<span style="right:258.90px;top:331.05px;font-size:11.7px;color:#000000;-webkit-text-stroke:0.12px #000000;">5%</span>
<span style="left:91.50px;top:348.05px;font-size:11.7px;color:#000000;letter-spacing:0.049px;-webkit-text-stroke:0.12px #000000;">DaysToRetain</span>
<span style="right:608.60px;top:348.05px;font-size:11.7px;color:#000000;-webkit-text-stroke:0.12px #000000;">30</span>
<span style="left:439.30px;top:348.05px;font-size:11.7px;color:#000000;letter-spacing:0.049px;-webkit-text-stroke:0.12px #000000;">DaysToRetain</span>
<span style="right:258.90px;top:348.05px;font-size:11.7px;color:#000000;-webkit-text-stroke:0.12px #000000;">30</span>
<span style="left:91.50px;top:366.05px;font-size:11.7px;color:#000000;letter-spacing:0.209px;-webkit-text-stroke:0.12px #000000;">NumberOfFulls</span>
<span style="right:608.60px;top:366.05px;font-size:11.7px;color:#000000;-webkit-text-stroke:0.12px #000000;">1</span>
<span style="left:439.30px;top:366.05px;font-size:11.7px;color:#000000;letter-spacing:0.209px;-webkit-text-stroke:0.12px #000000;">NumberOfFulls</span>
<span style="right:258.90px;top:366.05px;font-size:11.7px;color:#000000;-webkit-text-stroke:0.12px #000000;">30</span>
<span style="left:91.50px;top:383.05px;font-size:11.7px;color:#000000;letter-spacing:0.132px;-webkit-text-stroke:0.12px #000000;">DedupeDataStored(TB)</span>
<span style="right:608.60px;top:383.05px;font-size:11.7px;color:#000000;-webkit-text-stroke:0.12px #000000;">57</span>
<span style="left:439.30px;top:383.05px;font-size:11.7px;color:#000000;letter-spacing:0.132px;-webkit-text-stroke:0.12px #000000;">DedupeDataStored(TB)</span>
<span style="right:258.90px;top:383.05px;font-size:11.7px;color:#000000;-webkit-text-stroke:0.12px #000000;">57</span>
<span style="left:91.50px;top:400.05px;font-size:11.7px;color:#000000;letter-spacing:0.212px;-webkit-text-stroke:0.12px #000000;">IncrementalData(TB)</span>
<span style="right:608.60px;top:400.05px;font-size:11.7px;color:#000000;-webkit-text-stroke:0.12px #000000;">150</span>
<span style="left:439.30px;top:400.05px;font-size:11.7px;color:#000000;letter-spacing:0.212px;-webkit-text-stroke:0.12px #000000;">IncrementalData(TB)</span>
<span style="right:258.90px;top:400.05px;font-size:11.7px;color:#000000;-webkit-text-stroke:0.12px #000000;">150</span>
<span style="left:91.50px;top:418.05px;font-size:11.7px;color:#000000;letter-spacing:0.127px;-webkit-text-stroke:0.12px #000000;">DataToIngest(TB)</span>
<span style="right:608.60px;top:418.05px;font-size:11.7px;color:#000000;-webkit-text-stroke:0.12px #000000;">250</span>
<span style="left:439.30px;top:418.05px;font-size:11.7px;color:#000000;letter-spacing:0.127px;-webkit-text-stroke:0.12px #000000;">DataToIngest(TB)</span>
<span style="right:258.90px;top:418.05px;font-size:11.7px;color:#000000;-webkit-text-stroke:0.12px #000000;">3150</span>
<span style="left:91.50px;top:435.05px;font-size:11.7px;color:#000000;letter-spacing:0.165px;-webkit-text-stroke:0.12px #000000;">ActualDataToProtect(TB)</span>
<span style="right:608.60px;top:435.05px;font-size:11.7px;color:#000000;-webkit-text-stroke:0.12px #000000;">250</span>
<span style="left:439.30px;top:435.05px;font-size:11.7px;color:#000000;letter-spacing:0.165px;-webkit-text-stroke:0.12px #000000;">ActualDataToProtect(TB)</span>
<span style="right:258.90px;top:435.05px;font-size:11.7px;color:#000000;-webkit-text-stroke:0.12px #000000;">250</span>
<span style="left:91.50px;top:452.05px;font-size:11.7px;color:#000000;letter-spacing:0.060px;-webkit-text-stroke:0.12px #000000;">LogicalDataReduction</span>
<span style="right:608.60px;top:452.05px;font-size:11.7px;color:#ff0000;-webkit-text-stroke:0.12px #ff0000;">77.20%</span>
<span style="left:439.30px;top:452.05px;font-size:11.7px;color:#000000;letter-spacing:0.060px;-webkit-text-stroke:0.12px #000000;">LogicalDataReduction</span>
<span style="right:258.90px;top:452.05px;font-size:11.7px;color:#ff0000;-webkit-text-stroke:0.12px #ff0000;">98.19%</span>
<span style="left:91.50px;top:469.05px;font-size:11.7px;color:#000000;letter-spacing:0.067px;-webkit-text-stroke:0.12px #000000;">LogicalDedupeRatio</span>
<span style="right:608.60px;top:469.05px;font-size:11.7px;color:#ff0000;-webkit-text-stroke:0.12px #ff0000;">4.39:1</span>
<span style="left:439.30px;top:469.05px;font-size:11.7px;color:#000000;letter-spacing:0.067px;-webkit-text-stroke:0.12px #000000;">LogicalDedupeRatio</span>
<span style="right:258.90px;top:469.05px;font-size:11.7px;color:#ff0000;-webkit-text-stroke:0.12px #ff0000;">55:1</span>
<span style="left:91.50px;top:487.05px;font-size:11.7px;color:#000000;letter-spacing:0.188px;-webkit-text-stroke:0.12px #000000;">ActualDataReduction</span>
<span style="right:608.60px;top:487.05px;font-size:11.7px;color:#00b050;-webkit-text-stroke:0.12px #00b050;">77.20%</span>
<span style="left:439.30px;top:487.05px;font-size:11.7px;color:#000000;letter-spacing:0.188px;-webkit-text-stroke:0.12px #000000;">ActualDataReduction</span>
<span style="right:258.90px;top:487.05px;font-size:11.7px;color:#00b050;-webkit-text-stroke:0.12px #00b050;">77.20%</span>
<span style="left:91.50px;top:504.05px;font-size:11.7px;color:#000000;letter-spacing:0.205px;-webkit-text-stroke:0.12px #000000;">ActualDedupeRatio</span>
<span style="right:608.60px;top:504.05px;font-size:11.7px;color:#00b050;-webkit-text-stroke:0.12px #00b050;">4.39:1</span>
<span style="left:439.30px;top:504.05px;font-size:11.7px;color:#000000;letter-spacing:0.205px;-webkit-text-stroke:0.12px #000000;">ActualDedupeRatio</span>
<span style="right:258.90px;top:504.05px;font-size:11.7px;color:#00b050;-webkit-text-stroke:0.12px #00b050;">4.39:1</span>
<span style="left:439.30px;top:297.05px;font-size:11.7px;color:#3b65b1;letter-spacing:0.058px;-webkit-text-stroke:0.12px #3b65b1;">Logical Data Reduction (All Fulls)</span>
<span style="left:730.35px;top:297.05px;transform:translateX(-50%);font-size:11.7px;color:#3b65b1;-webkit-text-stroke:0.12px #3b65b1;">Data</span>
<span style="left:91.50px;top:539.05px;font-size:11.7px;color:#000000;letter-spacing:0.364px;-webkit-text-stroke:0.12px #000000;">Downloaded From virtuallysober.com</span>
</div></body></html>
